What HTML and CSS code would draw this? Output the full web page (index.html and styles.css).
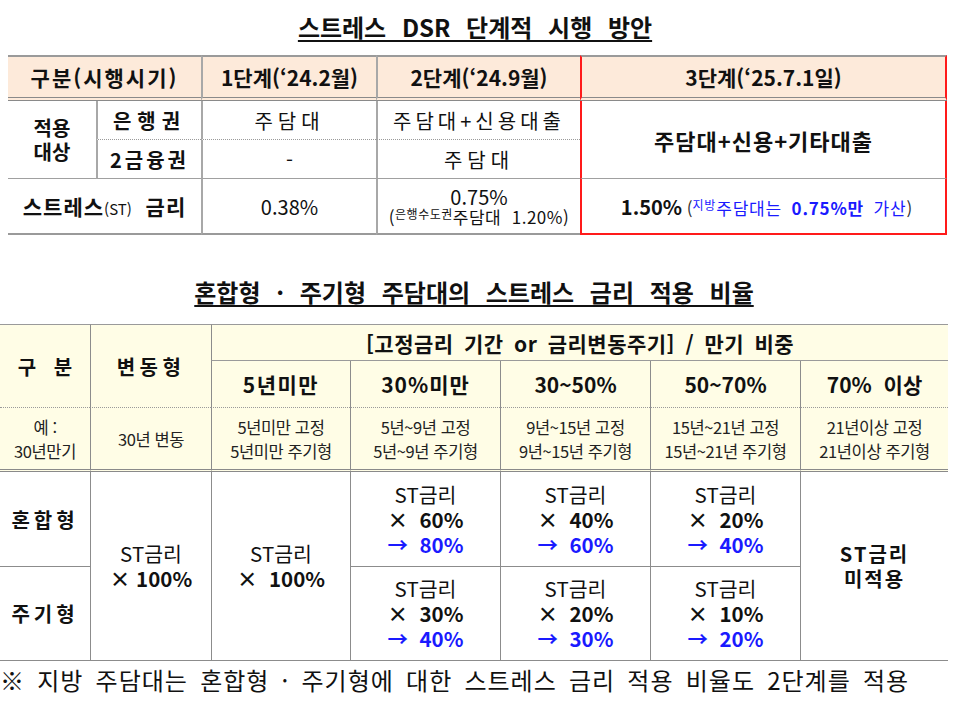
FILE: index.html
```html
<!DOCTYPE html>
<html lang="ko">
<head>
<meta charset="utf-8">
<link rel="stylesheet" href="styles.css">
</head>
<body>
<h1 class="title t1"><span>스트레스 DSR 단계적 시행 방안</span></h1>
<table class="stage">
  <colgroup>
    <col style="width:88px"><col style="width:105px"><col style="width:175px"><col style="width:204px"><col style="width:367px">
  </colgroup>
  <tr class="h">
    <th colspan="2" class="ls2">구분(시행시기)</th>
    <th class="bl">1단계(‘24.2월)</th>
    <th class="bl">2단계(‘24.9월)</th>
    <th class="red rt">3단계(‘25.7.1일)</th>
  </tr>
  <tr class="r1">
    <th rowspan="2" class="lbl">적용<br>대상</th>
    <th class="bl dot ls6">은행권</th>
    <td class="bl dot ls5">주담대</td>
    <td class="bl dot ls4">주담대+신용대출</td>
    <th rowspan="2" class="red rm big">주담대+신용+기타대출</th>
  </tr>
  <tr class="r2">
    <th class="bl solid ls3">2금융권</th>
    <td class="bl solid">-</td>
    <td class="bl solid ls5">주담대</td>
  </tr>
  <tr class="r3">
    <th colspan="2" class="last">스트레스<span class="st">(ST)</span>&nbsp; 금리</th>
    <td class="bl last">0.38%</td>
    <td class="bl last two">0.75%<br><span class="sm">(<span class="sup">은행수도권</span>주담대&nbsp; 1.20%)</span></td>
    <td class="red rb"><b class="k">1.50%</b> <span class="paren">(</span><span class="blue"><span class="sup">지방</span>주담대는 <b>0.75%만</b> 가산</span><span class="paren">)</span></td>
  </tr>
</table>

<h2 class="title t2"><span>혼합형 · 주기형 주담대의 스트레스 금리 적용 비율</span></h2>
<table class="ratio">
  <colgroup>
    <col style="width:90px"><col style="width:121px"><col style="width:139px"><col style="width:150px"><col style="width:150px"><col style="width:150px"><col style="width:148px">
  </colgroup>
  <tr class="ha">
    <th rowspan="2" class="dot wide">구 분</th>
    <th rowspan="2" class="bl dot vd">변동형</th>
    <th colspan="5" class="bl line">[고정금리 기간 or 금리변동주기] / 만기 비중</th>
  </tr>
  <tr class="hb">
    <th class="bl dot ls15">5년미만</th>
    <th class="bl dot ls1">30%미만</th>
    <th class="bl dot">30~50%</th>
    <th class="bl dot">50~70%</th>
    <th class="bl dot">70%&nbsp; 이상</th>
  </tr>
  <tr class="ex">
    <td>예 :<br>30년만기</td>
    <td class="bl">30년 변동</td>
    <td class="bl">5년미만 고정<br>5년미만 주기형</td>
    <td class="bl">5년~9년 고정<br>5년~9년 주기형</td>
    <td class="bl">9년~15년 고정<br>9년~15년 주기형</td>
    <td class="bl">15년~21년 고정<br>15년~21년 주기형</td>
    <td class="bl">21년이상 고정<br>21년이상 주기형</td>
  </tr>
  <tr class="b1">
    <th class="mid">혼합형</th>
    <td rowspan="2" class="bl end st">ST금리<br><b>× 100%</b></td>
    <td rowspan="2" class="bl end st">ST금리<br><b>×&nbsp; 100%</b></td>
    <td class="bl mid st">ST금리<br><b>×&nbsp; 60%</b><br><b class="blue">→&nbsp; 80%</b></td>
    <td class="bl mid st">ST금리<br><b>×&nbsp; 40%</b><br><b class="blue">→&nbsp; 60%</b></td>
    <td class="bl mid st">ST금리<br><b>×&nbsp; 20%</b><br><b class="blue">→&nbsp; 40%</b></td>
    <th rowspan="2" class="bl end na">ST금리<br>미적용</th>
  </tr>
  <tr class="b2">
    <th class="end">주기형</th>
    <td class="bl end st">ST금리<br><b>×&nbsp; 30%</b><br><b class="blue">→&nbsp; 40%</b></td>
    <td class="bl end st">ST금리<br><b>×&nbsp; 20%</b><br><b class="blue">→&nbsp; 30%</b></td>
    <td class="bl end st">ST금리<br><b>×&nbsp; 10%</b><br><b class="blue">→&nbsp; 20%</b></td>
  </tr>
</table>
<p class="note">※ 지방 주담대는 혼합형 · 주기형에 대한 스트레스 금리 적용 비율도 2단계를 적용</p>
</body>
</html>
```

FILE: styles.css
```css
html, body {
  margin: 0;
  padding: 0;
  background: #fff;
}
body {
  font-family: "Noto Sans CJK KR", "Noto Sans", sans-serif;
  color: #111;
  width: 960px;
}
.title {
  margin: 0;
  text-align: center;
  font-weight: 700;
  font-size: 24px;
  line-height: 30px;
}
.title span {
  text-decoration: underline;
  text-decoration-thickness: 1.5px;
  text-underline-offset: 3px;
}
.t1 {
  height: 43px;
  padding-top: 12px;
  padding-right: 10px;
  word-spacing: 9px;
}
.t2 {
  height: 47px;
  padding-top: 42px;
  padding-right: 12px;
  word-spacing: 9px;
}

table {
  border-collapse: separate;
  border-spacing: 0;
  table-layout: fixed;
}
th, td {
  padding: 0;
  text-align: center;
  vertical-align: middle;
}

/* stage table */
.stage {
  margin-left: 8px;
  width: 939px;
  font-size: 20px;
}
.stage th { font-weight: 700; }
.stage td { font-weight: 400; }
.stage .h th {
  background: #fdeada;
  border-top: 2px solid #9a9a9a;
  border-bottom: 4px double #8a8a8a;
  height: 40px;
  font-size: 21px;
}
.stage .bl { border-left: 2px solid #a8a8a8; }
.stage .dot { border-bottom: 1px dotted #9a9a9a; }
.stage .solid, .stage .lbl, .stage .rm { border-bottom: 1px solid #a0a0a0; }
.stage .last { border-bottom: 2px solid #9a9a9a; }
.stage .r1 th, .stage .r1 td { height: 38px; }
.stage .r2 th, .stage .r2 td { height: 38px; }
.stage .r3 th, .stage .r3 td { height: 54px; }
.ls1 { letter-spacing: 1px; }
.ls15 { letter-spacing: 1.5px; }
.ls2 { letter-spacing: 2px; }
.ls3 { letter-spacing: 3px; }
.ls4 { letter-spacing: 4px; }
.ls5 { letter-spacing: 5px; }
.ls6 { letter-spacing: 6px; }
.stage .lbl { line-height: 24px; font-size: 20px; }
.stage .red {
  border-left: 2px solid #ff1a1a;
  border-right: 2px solid #ff1a1a;
}
.stage .rt { border-top: 2px solid #ff1a1a; }
.stage .rb { border-bottom: 2px solid #ff1a1a; }
.stage .big { font-size: 22px; letter-spacing: 1px; }
.stage .st { font-size: 15px; font-weight: 400; letter-spacing: 0; }
.stage .r3 th { font-size: 21px; letter-spacing: 1px; }
.stage .two { line-height: 19px; }
.stage .sm { font-size: 17px; letter-spacing: 0.5px; }
.sup {
  font-size: 12px;
  vertical-align: 5px;
  line-height: 0;
}
.stage .rb { font-size: 17px; padding-left: 6px; }
.stage .rb .k { font-size: 20px; }
.stage .blue { color: #1a1aff; letter-spacing: 0.8px; word-spacing: 4px; }
.paren { color: #333; }

/* ratio table */
.ratio {
  width: 948px;
  font-size: 20px;
}
.ratio th { font-weight: 700; }
.ratio .bl { border-left: 1px solid #8c8c8c; }
.ratio .ha th, .ratio .hb th, .ratio .ex td {
  background: #fffde6;
}
.ratio .ha th {
  border-top: 1px solid #9a9a9a;
  height: 35px;
}
.ratio .ha .line {
  border-bottom: 1px solid #9a9a9a;
  font-size: 21px;
  letter-spacing: 0.5px;
  word-spacing: 4px;
}
.ratio .ha .vd { letter-spacing: 4.5px; }
.ratio .hb th { height: 46px; font-size: 21px; }
.ratio .dot { border-bottom: 1px dotted #9a9a9a; }
.ratio .wide { word-spacing: 12px; font-size: 20px; }
.ratio .ex td {
  font-size: 16.5px;
  line-height: 24px;
  letter-spacing: -0.4px;
  color: #222;
  border-bottom: 3px double #8a8a8a;
  height: 61px;
}
.ratio .b1 th, .ratio .b1 td { height: 94px; }
.ratio .b2 th, .ratio .b2 td { height: 93px; }
.ratio .mid { border-bottom: 1px solid #8c8c8c; }
.ratio .end { border-bottom: 1px solid #8c8c8c; }
.ratio .st {
  font-size: 20.5px;
  line-height: 25px;
  font-weight: 400;
}
.ratio .st b { font-weight: 700; }
.ratio .b1 th, .ratio .b2 th { font-size: 20px; letter-spacing: 4px; }
.ratio .na { line-height: 25px; font-size: 20px; letter-spacing: 2px !important; }
.blue { color: #1a1aff; }

.note {
  margin: 0;
  padding-top: 2px;
  font-size: 24px;
  line-height: 34px;
  word-spacing: 4.5px;
  letter-spacing: 1px;
  white-space: nowrap;
}
```
